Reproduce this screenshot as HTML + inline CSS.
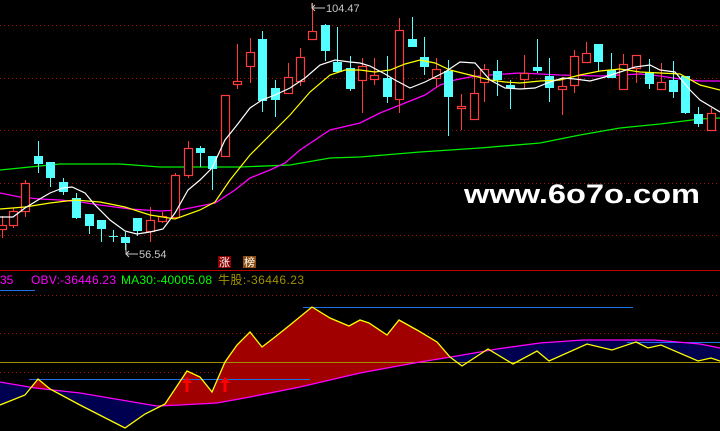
<!DOCTYPE html>
<html><head><meta charset="utf-8"><style>
html,body{margin:0;padding:0;background:#000;width:720px;height:431px;overflow:hidden}
svg{display:block}
text{font-family:"Liberation Sans","Noto Sans CJK SC",sans-serif}
</style></head><body>
<svg id="s" width="720" height="431" viewBox="0 0 720 431" xmlns="http://www.w3.org/2000/svg">
<defs>
<clipPath id="belowMag"><polygon points="0,382 35,388 80,393 133,402 157,406 180,405 217,403 250,397 300,387 360,373 420,362 457,356 497,349 540,343 583,340 655,340 700,344 720,348 720,431 0,431"/></clipPath>
<clipPath id="belowYel"><polygon points="0,405 25,395 38,379 50,389 80,405 125,428 145,414 165,404 187,371 200,377 212,392 225,362 237,345 250,332 262,347 275,337 290,325 312,307 330,318 349,326 360,320 369,323 387,335 399,320 417,330 437,342 450,357 462,366 488,349 513,364 537,351 549,361 587,344 612,350 636,342 648,348 661,345 698,361 711,358 720,361 720,431 0,431"/></clipPath>
<clipPath id="aboveYel"><polygon points="0,0 0,405 25,395 38,379 50,389 80,405 125,428 145,414 165,404 187,371 200,377 212,392 225,362 237,345 250,332 262,347 275,337 290,325 312,307 330,318 349,326 360,320 369,323 387,335 399,320 417,330 437,342 450,357 462,366 488,349 513,364 537,351 549,361 587,344 612,350 636,342 648,348 661,345 698,361 711,358 720,361 720,0"/></clipPath>
</defs>
<g stroke="#a01010" stroke-width="1" stroke-dasharray="1,3">
<line x1="0" y1="25.5" x2="720" y2="25.5"/><line x1="0" y1="78.5" x2="720" y2="78.5"/>
<line x1="0" y1="130.5" x2="720" y2="130.5"/><line x1="0" y1="183.5" x2="720" y2="183.5"/>
<line x1="0" y1="235.5" x2="720" y2="235.5"/>
<line x1="0" y1="295.5" x2="720" y2="295.5"/><line x1="0" y1="333.5" x2="720" y2="333.5"/>
<line x1="0" y1="372.5" x2="720" y2="372.5"/>
</g>
<line x1="0" y1="270.5" x2="720" y2="270.5" stroke="#c00000"/>
<line x1="0" y1="290.5" x2="35" y2="290.5" stroke="#1e6ee6"/>
<!-- OBV fills -->
<rect x="0" y="290" width="720" height="141" fill="#a00000" clip-path="url(#belowYel)" />
<rect x="0" y="290" width="720" height="141" fill="#000" clip-path="url(#belowMag)" />
<g clip-path="url(#belowMag)"><rect x="0" y="290" width="720" height="141" fill="#000050" clip-path="url(#aboveYel)"/></g>
<line x1="0" y1="362.5" x2="720" y2="362.5" stroke="#a09000"/>
<line x1="303" y1="307.5" x2="633" y2="307.5" stroke="#1e6ee6"/>
<line x1="29" y1="379.5" x2="310" y2="379.5" stroke="#1e6ee6"/>
<line x1="627" y1="342.5" x2="720" y2="342.5" stroke="#1e6ee6"/>
<polyline fill="none" stroke="#ff00ff" stroke-width="1.3" points="0,382 35,388 80,393 133,402 157,406 180,405 217,403 250,397 300,387 360,373 420,362 457,356 497,349 540,343 583,340 655,340 700,344 720,348"/>
<polyline fill="none" stroke="#ffff00" stroke-width="1.3" points="0,405 25,395 38,379 50,389 80,405 125,428 145,414 165,404 187,371 200,377 212,392 225,362 237,345 250,332 262,347 275,337 290,325 312,307 330,318 349,326 360,320 369,323 387,335 399,320 417,330 437,342 450,357 462,366 488,349 513,364 537,351 549,361 587,344 612,350 636,342 648,348 661,345 698,361 711,358 720,361"/>
<g fill="#ff0000"><polygon points="187,377 182,383 185.5,383 185.5,392 188.5,392 188.5,383 192,383"/><polygon points="225,377 220,383 223.5,383 223.5,392 226.5,392 226.5,383 230,383"/></g>
<!-- MAs -->
<polyline fill="none" stroke="#00ee00" stroke-width="1.3" points="0,170 20,168 40,166 60,164 120,164 160,167 240,167 290,165 330,158 360,157 420,152 480,148 540,143 580,135 620,128 660,124 700,119 720,118"/>
<polyline fill="none" stroke="#ff00ff" stroke-width="1.3" points="0,193 20,197 40,199 60,200 80,202 100,205 130,209 160,211 180,210 200,206 215,203 235,190 250,178 270,170 285,163 300,150 330,130 360,123 380,113 400,105 425,95 440,85 455,80 470,77 490,75 520,73 560,75 600,76 640,74 660,76 680,79 700,81 720,81"/>
<g id="candles"></g>
<polyline fill="none" stroke="#ffff00" stroke-width="1.2" points="0,209 25,207 50,203 75,200 100,202 125,207 150,215 175,219 200,210 215,202 230,180 250,155 270,135 290,115 310,92 330,75 345,70 360,70 375,72 390,70 405,64 420,60 435,63 450,70 470,75 490,80 505,82 520,83 540,81 560,80 580,75 600,71 620,69 640,72 660,73 680,74 700,85 720,90"/>
<polyline fill="none" stroke="#ffffff" stroke-width="1.2" points="0,217 13,217 25,208 38,200 50,193 63,188 72,187 85,193 95,205 110,220 125,231 137,234 150,232 163,229 175,213 188,190 200,180 212,168 225,140 237,125 250,108 262,100 275,95 290,88 305,78 320,65 335,60 350,62 360,63 370,66 385,74 395,80 410,88 425,82 445,72 460,62 475,63 490,80 505,88 520,89 535,88 550,82 563,78 575,79 590,81 605,77 620,72 635,67 650,65 660,70 675,72 690,90 700,100 720,112"/>
<!-- labels -->
<g stroke="#c8c8c8" fill="none"><polyline points="312,3 312,8 325,8"/><polyline points="315,5 312,8 315,11"/>
<polyline points="126,244 126,254 138,254"/><polyline points="129,251 126,254 129,257"/></g>
<text x="326" y="12" font-size="11" fill="#c8c8c8">104.47</text>
<text x="139" y="258" font-size="11" fill="#c8c8c8">56.54</text>
<rect x="218" y="256" width="13" height="12" fill="#8a0000"/><text x="219" y="266" font-size="11" fill="#fff">涨</text>
<rect x="243" y="256" width="13" height="12" fill="#8a4a10"/><text x="244" y="266" font-size="11" fill="#fff">榜</text>
<g font-size="12">
<text x="0" y="284" fill="#ff00ff">35</text>
<text x="31" y="284" fill="#ff00ff" textLength="85">OBV:-36446.23</text>
<text x="121" y="284" fill="#00ff00" textLength="91">MA30:-40005.08</text>
<text x="218" y="284" fill="#a09000" textLength="86">牛股:-36446.23</text>
</g>
<text x="464" y="203" font-size="27" font-weight="bold" fill="#fff" textLength="236" lengthAdjust="spacingAndGlyphs">www.6o7o.com</text>
</svg>
<script>
var C=[[2,'r',225,229,216,238],[13,'r',211,225,208,228],[25,'r',183,211,180,217],[38,'c',156,164,141,173],[50,'c',162,178,162,187],[63,'c',182,192,178,195],[76,'c',198,218,193,219],[89,'c',214,226,214,234],[101,'c',220,229,220,242],[113,'c',236,237,230,242],[125,'c',237,243,232,250],[137,'c',218,231,218,236],[150,'r',220,231,207,242],[162,'r',216,221,212,223],[175,'r',175,217,173,217],[188,'r',148,175,141,178],[200,'c',148,153,146,167],[212,'c',156,169,156,190],[225,'r',95,156,95,156],[237,'r',81,84,44,89],[250,'r',52,66,38,83],[262,'c',39,101,31,112],[275,'c',88,100,80,117],[288,'r',77,93,63,93],[300,'r',57,81,48,86],[312,'r',31,39,3,40],[325,'c',25,51,24,61],[337,'c',62,72,27,72],[350,'c',68,89,56,91],[362,'r',66,80,58,113],[374,'r',75,79,58,85],[387,'c',78,97,56,103],[399,'r',30,99,18,113],[412,'c',39,47,17,47],[424,'c',57,67,37,75],[436,'r',69,78,58,88],[448,'c',71,97,60,136],[461,'r',106,108,94,130],[474,'r',93,119,70,119],[484,'r',69,82,64,102],[497,'c',71,80,60,96],[510,'c',85,88,80,109],[524,'r',73,79,55,89],[537,'c',67,71,39,73],[549,'c',76,88,58,102],[562,'r',86,89,77,115],[574,'r',56,85,50,93],[586,'r',53,62,42,62],[598,'c',44,62,44,71],[611,'c',70,78,53,78],[623,'r',64,89,54,89],[636,'r',55,68,55,83],[649,'c',72,84,59,89],[661,'r',82,89,63,89],[673,'c',80,92,61,98],[685,'c',76,113,76,114],[698,'c',114,124,107,127],[711,'r',113,130,108,130]];
var h='';C.forEach(function(k){var x=k[0],col=k[1]=='r'?'#ff3c3c':'#54ffff';
h+='<line x1="'+(x+.5)+'" y1="'+k[4]+'" x2="'+(x+.5)+'" y2="'+k[5]+'" stroke="'+col+'"/>';
var hgt=Math.max(k[3]-k[2],1);
if(k[1]=='r')h+='<rect x="'+(x-3.5)+'" y="'+(k[2]+.5)+'" width="8" height="'+hgt+'" fill="#000" stroke="'+col+'" stroke-width="1.2"/>';
else h+='<rect x="'+(x-4)+'" y="'+k[2]+'" width="9" height="'+hgt+'" fill="'+col+'"/>';});
document.getElementById('candles').innerHTML=h;
</script>
</body></html>
